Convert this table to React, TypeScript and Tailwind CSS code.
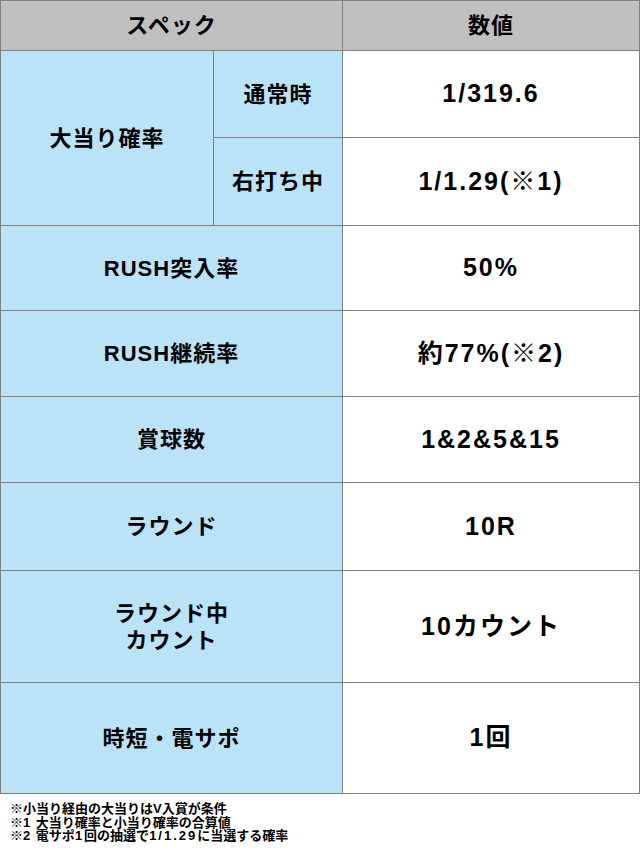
const font = { fontFamily: '"Liberation Sans", "Noto Sans CJK JP", sans-serif' };

const rows: { label: React.ReactNode; value: string; h: string }[] = [
  { label: "RUSH突入率", value: "50%", h: "h-[85px]" },
  { label: "RUSH継続率", value: "約77%(※2)", h: "h-[86px]" },
  { label: "賞球数", value: "1&2&5&15", h: "h-[86px]" },
  { label: "ラウンド", value: "10R", h: "h-[88px]" },
  {
    label: (
      <>
        ラウンド中
        <br />
        カウント
      </>
    ),
    value: "10カウント",
    h: "h-[112px]",
  },
  { label: "時短・電サポ", value: "1回", h: "h-[111px]" },
];

function Num({ children }: { children: React.ReactNode }) {
  return <span className="tracking-[2px]">{children}</span>;
}

export default function App() {
  const cell = "border border-[#808080] text-center align-middle font-bold text-black";
  const label = `${cell} bg-[#bbe3f8] text-[22px] tracking-[1px] leading-[27px]`;
  const value = `${cell} bg-white text-[25px] tracking-[2px]`;
  return (
    <div className="w-[640px] bg-white" style={font}>
      <table className="w-[640px] border-collapse table-fixed">
        <colgroup>
          <col className="w-[213px]" />
          <col className="w-[129px]" />
          <col />
        </colgroup>
        <tbody>
          {/* Header */}
          <tr className="h-[50px] bg-[#c0c0c0]">
            <th colSpan={2} className={`${cell} text-[22px] tracking-[1px]`}>
              スペック
            </th>
            <th className={`${cell} text-[22px] tracking-[1px]`}>数値</th>
          </tr>

          {/* 大当り確率 */}
          <tr className="h-[87px]">
            <td rowSpan={2} className={label}>
              大当り確率
            </td>
            <td className={label}>通常時</td>
            <td className={value}>1/319.6</td>
          </tr>
          <tr className="h-[88px]">
            <td className={label}>右打ち中</td>
            <td className={value}>1/1.29(※1)</td>
          </tr>

          {rows.map((r, i) => (
            <tr key={i} className={r.h}>
              <td colSpan={2} className={label}>
                {r.label}
              </td>
              <td className={value}>{r.value}</td>
            </tr>
          ))}
        </tbody>
      </table>

      {/* Footnotes */}
      <div className="pl-[10px] pt-[8px] text-[13px] font-bold leading-[13.5px] text-black">
        <p>※小当り経由の大当りはV入賞が条件</p>
        <p>
          ※<Num>1</Num> 大当り確率と小当り確率の合算値
        </p>
        <p>
          ※<Num>2</Num> 電サポ<Num>1</Num>回の抽選で<Num>1/1.29</Num>に当選する確率
        </p>
      </div>
    </div>
  );
}
